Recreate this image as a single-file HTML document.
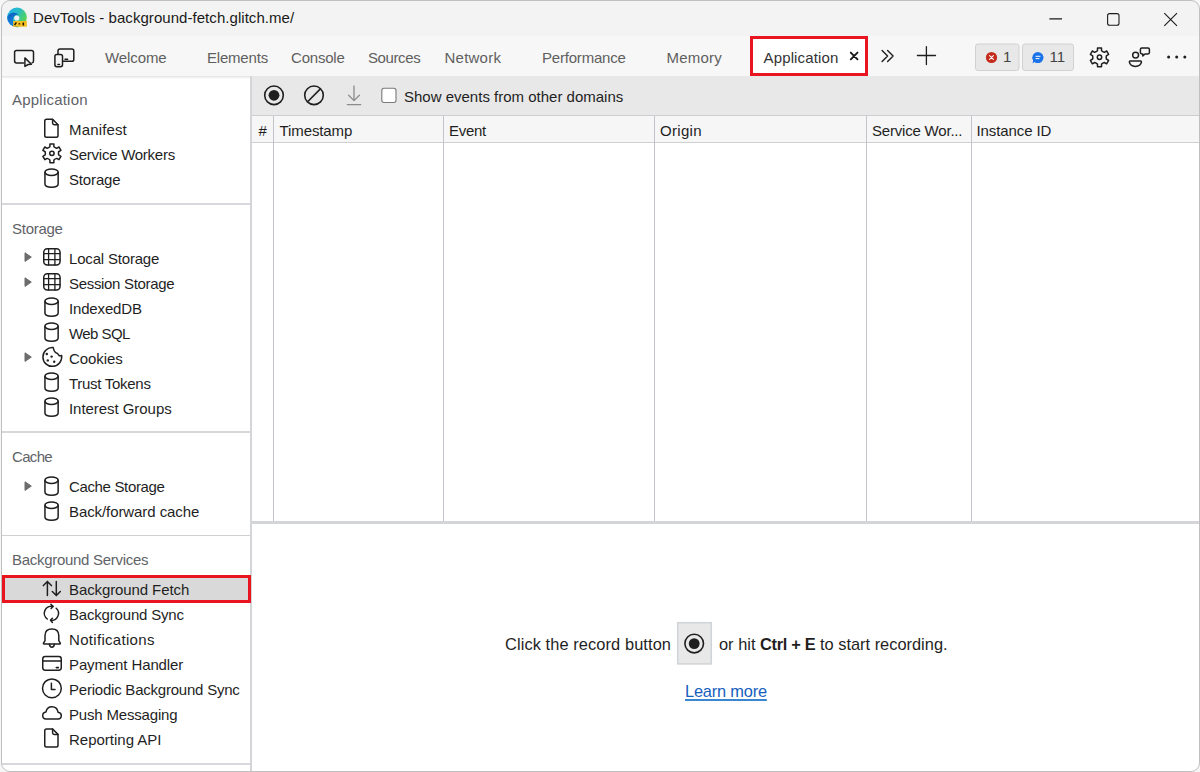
<!DOCTYPE html>
<html><head><meta charset="utf-8">
<style>
*{box-sizing:border-box;margin:0;padding:0}
html,body{width:1200px;height:772px;overflow:hidden;background:#f6f6f6;font-family:"Liberation Sans",sans-serif;}
.r{position:absolute}
.t{position:absolute;font-size:15px;white-space:nowrap;line-height:18px}
.ttl{color:#1a1a1a;letter-spacing:0.05px}
.tab{color:#5f5f5f;letter-spacing:-0.2px}
.tabsel{color:#333;letter-spacing:0.15px}
.badge{color:#444}
.hdr{color:#5f6368;letter-spacing:-0.1px}
.it{color:#1f1f1f;letter-spacing:-0.1px}
.big{font-size:16.4px;color:#1f1f1f}
.big b{font-weight:bold;letter-spacing:-0.3px}
.link{color:#1560bd;text-decoration:underline;text-decoration-color:#3a86d0;text-decoration-thickness:1.6px;text-underline-offset:2px;letter-spacing:-0.2px}
</style></head><body>
<div class="r" style="left:1px;top:0;width:1199px;height:772px;border-radius:9px;background:#fff;overflow:hidden"><div class="r" style="left:-1px;top:0;width:1200px;height:772px">
 <div class="r" style="left:0;top:0;width:1200px;height:36px;background:#f3f3f3"></div>
 <div class="r" style="left:0;top:36px;width:1200px;height:40px;background:#f7f7f7"></div>
 <div class="r" style="left:0;top:76px;width:1200px;height:3px;background:linear-gradient(#e3e3e3,rgba(255,255,255,0))"></div>
 <div class="r" style="left:250px;top:76px;width:2px;height:700px;background:#d3d5d9"></div>
 <div class="r" style="left:252px;top:76px;width:948px;height:39px;background:#e8e8e8"></div>
 <div class="r" style="left:252px;top:115px;width:948px;height:1px;background:#cdcfd3"></div>
 <div class="r" style="left:252px;top:116px;width:948px;height:26px;background:#f6f6f6"></div>
 <div class="r" style="left:252px;top:142px;width:948px;height:1px;background:#cdcfd3"></div>
 <div class="r" style="left:273px;top:116px;width:1px;height:406px;background:#c1c4c8"></div>
 <div class="r" style="left:443px;top:116px;width:1px;height:406px;background:#c1c4c8"></div>
 <div class="r" style="left:654px;top:116px;width:1px;height:406px;background:#c1c4c8"></div>
 <div class="r" style="left:866px;top:116px;width:1px;height:406px;background:#c1c4c8"></div>
 <div class="r" style="left:971px;top:116px;width:1px;height:406px;background:#c1c4c8"></div>
 <div class="r" style="left:252px;top:521px;width:948px;height:3px;background:#d3d5d9"></div>
 <div class="r" style="left:2px;top:203px;width:248px;height:2px;background:#d6d8dc"></div>
 <div class="r" style="left:2px;top:431px;width:248px;height:2px;background:#d6d8dc"></div>
 <div class="r" style="left:2px;top:535px;width:248px;height:1px;background:#cfd1d5"></div>
 <div class="r" style="left:2px;top:763px;width:248px;height:2px;background:#d6d8dc"></div>
 <div class="r" style="left:2px;top:575px;width:249px;height:28px;background:#d9d9d9;border:3px solid #e8141f"></div>
 <div class="r" style="left:750px;top:36px;width:118px;height:40px;background:#fff;border:3px solid #e8141f"></div>
 <svg width="1200" height="772" viewBox="0 0 1200 772" style="position:absolute;left:0;top:0"><g transform="translate(44,118.5)" fill="none" stroke="#1f1f1f" stroke-width="1.5" stroke-linecap="round" stroke-linejoin="round"><path d="M2.5,0.75 H8.6 L14,6.2 V17 Q14,18.75 12.25,18.75 H2.5 Q0.75,18.75 0.75,17 V2.5 Q0.75,0.75 2.5,0.75Z"/><path d="M8.6,0.9 V4.6 Q8.6,6.2 10.2,6.2 H13.9"/></g><g fill="none" stroke="#1f1f1f" stroke-width="1.5" stroke-linecap="round" stroke-linejoin="round" stroke-width="1.4"><path d="M49.91,146.74 L49.92,144.06 L53.88,144.06 L53.89,146.74 Q55.11,147.79 56.62,148.32 L58.96,146.99 L60.94,150.41 L58.62,151.77 Q58.32,153.35 58.62,154.93 L60.94,156.29 L58.96,159.71 L56.62,158.38 Q55.11,158.91 53.89,159.96 L53.88,162.64 L49.92,162.64 L49.91,159.96 Q48.69,158.91 47.18,158.38 L44.84,159.71 L42.86,156.29 L45.18,154.93 Q45.48,153.35 45.18,151.77 L42.86,150.41 L44.84,146.99 L47.18,148.32 Q48.69,147.79 49.91,146.74Z"/><circle cx="51.9" cy="153.35" r="2.2"/></g><g transform="translate(44.2,168.2)" fill="none" stroke="#1f1f1f" stroke-width="1.5" stroke-linecap="round" stroke-linejoin="round"><ellipse cx="7.35" cy="4" rx="6.6" ry="3.2"/><path d="M0.75,4 V15.8 Q0.75,19 7.35,19 Q13.95,19 13.95,15.8 V4"/></g><path d="M25,252.8 L31.3,257.1 L25,261.4Z" fill="#6d6d6d" stroke="#6d6d6d" stroke-width="1" stroke-linejoin="round"/><g transform="translate(43,248)" fill="none" stroke="#1f1f1f" stroke-width="1.5" stroke-linecap="round" stroke-linejoin="round"><rect x="0.75" y="0.75" width="16.3" height="16.3" rx="3.5"/><path d="M5.6,1 V17 M11.9,1 V17 M1,5.6 H17 M1,11.6 H17" stroke-width="1.3"/></g><path d="M25,277.8 L31.3,282.1 L25,286.4Z" fill="#6d6d6d" stroke="#6d6d6d" stroke-width="1" stroke-linejoin="round"/><g transform="translate(43,273)" fill="none" stroke="#1f1f1f" stroke-width="1.5" stroke-linecap="round" stroke-linejoin="round"><rect x="0.75" y="0.75" width="16.3" height="16.3" rx="3.5"/><path d="M5.6,1 V17 M11.9,1 V17 M1,5.6 H17 M1,11.6 H17" stroke-width="1.3"/></g><g transform="translate(44.2,297.2)" fill="none" stroke="#1f1f1f" stroke-width="1.5" stroke-linecap="round" stroke-linejoin="round"><ellipse cx="7.35" cy="4" rx="6.6" ry="3.2"/><path d="M0.75,4 V15.8 Q0.75,19 7.35,19 Q13.95,19 13.95,15.8 V4"/></g><g transform="translate(44.2,322.2)" fill="none" stroke="#1f1f1f" stroke-width="1.5" stroke-linecap="round" stroke-linejoin="round"><ellipse cx="7.35" cy="4" rx="6.6" ry="3.2"/><path d="M0.75,4 V15.8 Q0.75,19 7.35,19 Q13.95,19 13.95,15.8 V4"/></g><g transform="translate(44.2,372.2)" fill="none" stroke="#1f1f1f" stroke-width="1.5" stroke-linecap="round" stroke-linejoin="round"><ellipse cx="7.35" cy="4" rx="6.6" ry="3.2"/><path d="M0.75,4 V15.8 Q0.75,19 7.35,19 Q13.95,19 13.95,15.8 V4"/></g><g transform="translate(44.2,397.2)" fill="none" stroke="#1f1f1f" stroke-width="1.5" stroke-linecap="round" stroke-linejoin="round"><ellipse cx="7.35" cy="4" rx="6.6" ry="3.2"/><path d="M0.75,4 V15.8 Q0.75,19 7.35,19 Q13.95,19 13.95,15.8 V4"/></g><path d="M25,352.8 L31.3,357.1 L25,361.4Z" fill="#6d6d6d" stroke="#6d6d6d" stroke-width="1" stroke-linejoin="round"/><g fill="none" stroke="#1f1f1f" stroke-width="1.5" stroke-linecap="round" stroke-linejoin="round"><path d="M53.2,347.6 A9.4,9.4 0 1 0 61.6,355.4 Q58.6,356.6 57.6,353.4 Q54.2,352.8 53.2,347.6Z"/></g><g fill="#1f1f1f"><circle cx="46.8" cy="354" r="1.2"/><circle cx="51.6" cy="356.6" r="1.2"/><circle cx="47.8" cy="360.4" r="1.2"/><circle cx="54.2" cy="361.8" r="1.2"/></g><path d="M25,481.8 L31.3,486.1 L25,490.4Z" fill="#6d6d6d" stroke="#6d6d6d" stroke-width="1" stroke-linejoin="round"/><g transform="translate(44.2,476.2)" fill="none" stroke="#1f1f1f" stroke-width="1.5" stroke-linecap="round" stroke-linejoin="round"><ellipse cx="7.35" cy="4" rx="6.6" ry="3.2"/><path d="M0.75,4 V15.8 Q0.75,19 7.35,19 Q13.95,19 13.95,15.8 V4"/></g><g transform="translate(44.2,501.2)" fill="none" stroke="#1f1f1f" stroke-width="1.5" stroke-linecap="round" stroke-linejoin="round"><ellipse cx="7.35" cy="4" rx="6.6" ry="3.2"/><path d="M0.75,4 V15.8 Q0.75,19 7.35,19 Q13.95,19 13.95,15.8 V4"/></g><g fill="none" stroke="#1f1f1f" stroke-width="1.5" stroke-linecap="round" stroke-linejoin="round"><path d="M47.4,581.5 V595.6 M43.4,585.6 L47.4,581.5 L51.4,585.6"/><path d="M56.3,581.5 V595.6 M52.3,591.5 L56.3,595.6 L60.3,591.5"/></g><g fill="none" stroke="#1f1f1f" stroke-width="1.5" stroke-linecap="round" stroke-linejoin="round"><path d="M52.9,606.45 A7,7 0 0 0 47.29,618.99"/><path d="M56.18,608.2 A7,7 0 0 1 50.65,620.35"/><path d="M50.9,604.3 L53,606.4 L51.1,608.5"/><path d="M52.4,618.2 L50.5,620.35 L52.4,622.5"/></g><g fill="none" stroke="#1f1f1f" stroke-width="1.5" stroke-linecap="round" stroke-linejoin="round"><path d="M45,640.6 V635.6 Q45,628.9 51.9,628.9 Q58.8,628.9 58.8,635.6 V640.6 L60.3,643.2 Q60.6,643.9 59.8,643.9 H44 Q43.2,643.9 43.5,643.2Z"/><path d="M49.4,644.2 Q49.8,647.3 51.9,647.3 Q54,647.3 54.4,644.2"/></g><g fill="none" stroke="#1f1f1f" stroke-width="1.5" stroke-linecap="round" stroke-linejoin="round"><rect x="42.75" y="656.6" width="18.5" height="13.6" rx="2.4"/><path d="M43,661 H61"/><path d="M56.3,667.6 H58.4" stroke-width="1.6"/></g><g fill="none" stroke="#1f1f1f" stroke-width="1.5" stroke-linecap="round" stroke-linejoin="round"><circle cx="51.9" cy="688.3" r="9.4"/><path d="M51.4,683.2 V689.4 H55"/></g><g fill="none" stroke="#1f1f1f" stroke-width="1.5" stroke-linecap="round" stroke-linejoin="round"><path d="M46,719 H58.2 Q61.3,719 61.3,715.6 Q61.3,712.6 58,712.2 Q57.2,706.7 52,706.7 Q46.9,706.7 46,711.9 Q42.7,712.3 42.7,715.6 Q42.7,719 46,719Z"/></g><g transform="translate(44,728.2)" fill="none" stroke="#1f1f1f" stroke-width="1.5" stroke-linecap="round" stroke-linejoin="round"><path d="M2.5,0.75 H8.6 L14,6.2 V17 Q14,18.75 12.25,18.75 H2.5 Q0.75,18.75 0.75,17 V2.5 Q0.75,0.75 2.5,0.75Z"/><path d="M8.6,0.9 V4.6 Q8.6,6.2 10.2,6.2 H13.9"/></g><g fill="none" stroke="#1f1f1f" stroke-width="1.6"><circle cx="274" cy="95.3" r="9.3"/><circle cx="314" cy="95.3" r="9.3"/><path d="M307.6,101.7 L320.4,88.9"/></g><circle cx="274" cy="95.3" r="5.4" fill="#1f1f1f"/><g fill="none" stroke="#8c8c8c" stroke-width="1.3" stroke-linecap="round" stroke-linejoin="round"><path d="M354,86 V100.5 M348.6,95.2 L354,100.6 L359.4,95.2 M347.3,104.6 H360.7"/></g><rect x="381.8" y="88.3" width="14.2" height="14.2" rx="2.2" fill="#fff" stroke="#7a7a7a" stroke-width="1.1"/><rect x="677.7" y="622.7" width="33.6" height="41.2" fill="#e8e8e8" stroke="#d0d3d7" stroke-width="1.5"/><circle cx="694.2" cy="643.6" r="9.3" fill="none" stroke="#1f1f1f" stroke-width="1.6"/><circle cx="694.2" cy="643.6" r="5.4" fill="#1f1f1f"/><g fill="none" stroke="#1f1f1f" stroke-width="1.5" stroke-linecap="round" stroke-linejoin="round"><path d="M23.5,62.9 H16.5 Q14.6,62.9 14.6,61 V52.3 Q14.6,50.4 16.5,50.4 H31.6 Q33.5,50.4 33.5,52.3 V61 Q33.5,62.6 32.2,62.8"/><path d="M24.9,57.9 L31.4,64.2 L28.2,64.5 L24.9,66.4Z" fill="#f7f7f7" stroke-width="1.5"/></g><g fill="none" stroke="#1f1f1f" stroke-width="1.5" stroke-linecap="round" stroke-linejoin="round"><path d="M58,53.8 V51 Q58,49.1 59.9,49.1 H71.9 Q73.8,49.1 73.8,51 V59.4 Q73.8,61.3 71.9,61.3 H63"/><rect x="54.9" y="54.4" width="7.6" height="12.3" rx="1.9"/><path d="M65,59.2 H67.6 M57.9,64.4 H59.5"/></g><g fill="none" stroke="#1a1a1a" stroke-width="1.9" stroke-linecap="round"><path d="M850.8,52.6 L857.5,59.3 M857.5,52.6 L850.8,59.3"/></g><g fill="none" stroke="#1f1f1f" stroke-width="1.4" stroke-linecap="round" stroke-linejoin="round"><path d="M882.1,50.6 L887.6,56.1 L882.1,61.6 M887.6,50.6 L893.1,56.1 L887.6,61.6"/></g><g fill="none" stroke="#1f1f1f" stroke-width="1.3" stroke-linecap="round"><path d="M926.4,46.7 V64.5 M917.4,55.5 H935.5"/></g><rect x="975.5" y="44" width="43.5" height="26.5" rx="2.5" fill="#e8e8e8" stroke="#d1d1d1"/><rect x="1022.5" y="44" width="51" height="26.5" rx="2.5" fill="#e8e8e8" stroke="#d1d1d1"/><circle cx="991.5" cy="57.5" r="5.6" fill="#c42b1c"/><path d="M989.6,55.6 L993.4,59.4 M993.4,55.6 L989.6,59.4" stroke="#fff" stroke-width="1.1" stroke-linecap="round"/><path d="M1038,51.9 A5.6,5.6 0 1 1 1034.4,61.9 L1032.6,63.4 L1033.1,60.4 A5.6,5.6 0 0 1 1038,51.9Z" fill="#1a73e8"/><path d="M1036,56.3 H1040 M1036,58.6 H1039" stroke="#fff" stroke-width="1" stroke-linecap="round"/><g fill="none" stroke="#1f1f1f" stroke-width="1.5" stroke-linecap="round" stroke-linejoin="round" stroke-width="1.45"><path d="M1097.48,50.70 L1097.50,48.01 L1101.50,48.01 L1101.52,50.70 Q1102.76,51.76 1104.29,52.30 L1106.63,50.98 L1108.63,54.43 L1106.32,55.80 Q1106.01,57.40 1106.32,59.00 L1108.63,60.37 L1106.63,63.82 L1104.29,62.50 Q1102.76,63.04 1101.52,64.10 L1101.50,66.79 L1097.50,66.79 L1097.48,64.10 Q1096.24,63.04 1094.71,62.50 L1092.37,63.82 L1090.37,60.37 L1092.68,59.00 Q1092.99,57.40 1092.68,55.80 L1090.37,54.43 L1092.37,50.98 L1094.71,52.30 Q1096.24,51.76 1097.48,50.70Z"/><circle cx="1099.5" cy="57.3" r="2.2"/></g><g fill="none" stroke="#1f1f1f" stroke-width="1.5" stroke-linecap="round" stroke-linejoin="round"><circle cx="1135.6" cy="55.1" r="2.95"/><path d="M1130.2,61 H1140.6 Q1141.6,61 1141.4,62.2 Q1140.6,66.4 1135.4,66.4 Q1130.2,66.4 1129.4,62.2 Q1129.2,61 1130.2,61Z"/><path d="M1141.8,48 H1148 Q1149.4,48 1149.4,49.4 V52.6 Q1149.4,54 1148,54 H1145 L1142.8,56 V54 H1141.8 Q1140.4,54 1140.4,52.6 V49.4 Q1140.4,48 1141.8,48Z"/></g><g fill="#1f1f1f"><circle cx="1168.6" cy="56.9" r="1.5"/><circle cx="1176.7" cy="56.9" r="1.5"/><circle cx="1184.8" cy="56.9" r="1.5"/></g><g fill="none" stroke="#1a1a1a" stroke-width="1.1"><path d="M1049.4,18.9 H1062"/><rect x="1107.6" y="13.6" width="11.4" height="11.6" rx="2"/><path d="M1164.3,13.1 L1177,25.8 M1177,13.1 L1164.3,25.8"/></g><defs><linearGradient id="eg1" x1="0" y1="0" x2="1" y2="0.6"><stop offset="0" stop-color="#22aef0"/><stop offset="0.5" stop-color="#27bdc4"/><stop offset="1" stop-color="#5cd64a"/></linearGradient><linearGradient id="eg2" x1="0" y1="0" x2="0" y2="1"><stop offset="0" stop-color="#0e62c0"/><stop offset="1" stop-color="#1a88e4"/></linearGradient></defs><circle cx="17" cy="17.4" r="9.8" fill="url(#eg1)"/><path d="M7.2,17.4 A9.8,9.8 0 0 0 17,27.2 L19,27 Q12.5,25 12.8,19.2 Q13.5,14.2 18.5,14.5 Q16.5,12.2 12.6,12.8 Q8,13.8 7.2,17.4Z" fill="url(#eg2)"/><circle cx="16.8" cy="18" r="2.6" fill="#f3f3f3"/><rect x="13.2" y="20.9" width="13.7" height="5.9" rx="0.5" fill="#f5bf22"/><path d="M14.6,25 L16.4,22.4 M18.6,23.9 h1.6 M22.4,23.9 h1.4 M23.4,22.4 v3" stroke="#1a1400" stroke-width="1.4"/></svg>
 <div class="t ttl" style="left:33px;top:9px;">DevTools - background-fetch.glitch.me/</div><div class="t tab" style="left:105px;top:49px;letter-spacing:-0.1px">Welcome</div><div class="t tab" style="left:207px;top:49px;letter-spacing:-0.2px">Elements</div><div class="t tab" style="left:291px;top:49px;letter-spacing:-0.2px">Console</div><div class="t tab" style="left:368px;top:49px;letter-spacing:-0.39px">Sources</div><div class="t tab" style="left:444.5px;top:49px;letter-spacing:0.23px">Network</div><div class="t tab" style="left:542px;top:49px;letter-spacing:-0.2px">Performance</div><div class="t tab" style="left:666.5px;top:49px;letter-spacing:0.23px">Memory</div><div class="t tabsel" style="left:763.5px;top:49px;">Application</div><div class="t badge" style="left:1003px;top:48px;">1</div><div class="t badge" style="left:1049.5px;top:48px;">11</div><div class="t hdr" style="left:12px;top:91px;letter-spacing:0.220px">Application</div><div class="t hdr" style="left:12px;top:220px;letter-spacing:-0.267px">Storage</div><div class="t hdr" style="left:12px;top:448px;letter-spacing:-0.675px">Cache</div><div class="t hdr" style="left:12px;top:551px;letter-spacing:-0.294px">Background Services</div><div class="t it" style="left:69px;top:121px;letter-spacing:0.157px">Manifest</div><div class="t it" style="left:69px;top:146px;letter-spacing:-0.257px">Service Workers</div><div class="t it" style="left:69px;top:171px;letter-spacing:-0.150px">Storage</div><div class="t it" style="left:69px;top:250px;letter-spacing:-0.183px">Local Storage</div><div class="t it" style="left:69px;top:275px;letter-spacing:-0.321px">Session Storage</div><div class="t it" style="left:69px;top:300px;letter-spacing:-0.162px">IndexedDB</div><div class="t it" style="left:69px;top:325px;letter-spacing:-0.567px">Web SQL</div><div class="t it" style="left:69px;top:350px;letter-spacing:-0.067px">Cookies</div><div class="t it" style="left:69px;top:375px;letter-spacing:-0.282px">Trust Tokens</div><div class="t it" style="left:69px;top:400px;letter-spacing:-0.050px">Interest Groups</div><div class="t it" style="left:69px;top:478px;letter-spacing:-0.350px">Cache Storage</div><div class="t it" style="left:69px;top:503px;letter-spacing:-0.082px">Back/forward cache</div><div class="t it" style="left:69px;top:581px;letter-spacing:-0.100px">Background Fetch</div><div class="t it" style="left:69px;top:606px;letter-spacing:-0.186px">Background Sync</div><div class="t it" style="left:69px;top:631px;letter-spacing:0.308px">Notifications</div><div class="t it" style="left:69px;top:656px;letter-spacing:-0.114px">Payment Handler</div><div class="t it" style="left:69px;top:681px;letter-spacing:-0.222px">Periodic Background Sync</div><div class="t it" style="left:69px;top:706px;letter-spacing:-0.177px">Push Messaging</div><div class="t it" style="left:69px;top:731px;letter-spacing:-0.008px">Reporting API</div><div class="t it" style="left:404px;top:88px;letter-spacing:0px">Show events from other domains</div><div class="t it" style="left:258.5px;top:122px;letter-spacing:-0.1px">#</div><div class="t it" style="left:279.5px;top:122px;letter-spacing:-0.1px">Timestamp</div><div class="t it" style="left:449px;top:122px;letter-spacing:-0.3px">Event</div><div class="t it" style="left:660px;top:122px;letter-spacing:0.3px">Origin</div><div class="t it" style="left:872px;top:122px;letter-spacing:-0.2px">Service Wor...</div><div class="t it" style="left:976.5px;top:122px;letter-spacing:-0.1px">Instance ID</div><div class="t big" style="left:505px;top:635px;letter-spacing:0.09px">Click the record button</div><div class="t big" style="left:719px;top:635px;">or hit <b>Ctrl + E</b> to start recording.</div><div class="t big link" style="left:685px;top:682px;">Learn more</div>
</div></div>
<div class="r" style="left:1px;top:0;width:1199px;height:772px;border:1px solid #c0c0c0;border-radius:9px;pointer-events:none"></div>
</body></html>
